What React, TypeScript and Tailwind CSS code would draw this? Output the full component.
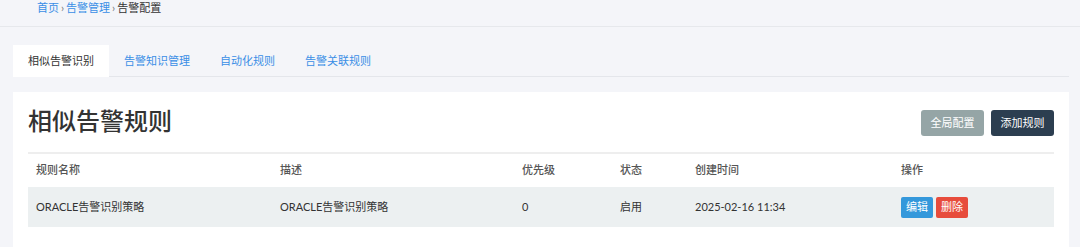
import React from "react";

const FONT = "font-['Lato','Noto_Sans_CJK_SC','Noto_Sans',sans-serif]";

const tabs = ["相似告警识别", "告警知识管理", "自动化规则", "告警关联规则"];

const cols = "grid grid-cols-[244px_242px_98px_75px_206px_1fr]";

export default function App() {
  return (
    <div className={`${FONT} h-[247px] w-full overflow-hidden bg-[#f4f5f9] text-[#333]`}>
      {/* breadcrumb */}
      <div className="flex h-[27px] items-start border-b border-[#e6e8ec] pl-[37px] text-[11px] leading-[15px]">
        <span className="text-[#3a8ee6]">首页</span>
        <span className="mx-[2px] text-[#777]">›</span>
        <span className="text-[#3a8ee6]">告警管理</span>
        <span className="mx-[2px] text-[#777]">›</span>
        <span className="text-[#333]">告警配置</span>
      </div>

      <div className="pl-[13px] pr-[11px] pt-[18px]">
        {/* tabs */}
        <div className="flex h-[32px] border-b border-[#e4e6eb]">
          {tabs.map((t, i) => (
            <div
              key={t}
              className={
                i === 0
                  ? "-mb-px flex h-[32px] items-center bg-white px-[15px] text-[11px] text-[#333]"
                  : "flex h-[32px] items-center px-[15px] text-[11px] text-[#3a8ee6]"
              }
            >
              {t}
            </div>
          ))}
        </div>

        {/* card */}
        <div className="mt-[15px] h-[155px] bg-white px-[15px] pt-[15px]">
          <div className="flex h-[45px] items-start justify-between">
            <h1 className="text-[24px] font-medium leading-[28px] text-[#333]">相似告警规则</h1>
            <div className="mt-[3px] flex gap-[7px]">
              <button className="flex h-[26px] w-[63px] items-center justify-center rounded-[3px] bg-[#95a5a6] text-[11px] text-white">
                全局配置
              </button>
              <button className="flex h-[26px] w-[63px] items-center justify-center rounded-[3px] bg-[#2c3e50] text-[11px] text-white">
                添加规则
              </button>
            </div>
          </div>

          <div className="border-t-2 border-[#eeeeee]">
            <div className={`${cols} h-[33px] items-center text-[11px] font-medium text-[#555]`}>
              <div className="pl-2">规则名称</div>
              <div className="pl-2">描述</div>
              <div className="pl-2">优先级</div>
              <div className="pl-2">状态</div>
              <div className="pl-2">创建时间</div>
              <div className="pl-2">操作</div>
            </div>
            <div className={`${cols} h-[40px] items-center bg-[#ecf0f1] text-[11px] text-[#333]`}>
              <div className="pl-2">ORACLE告警识别策略</div>
              <div className="pl-2">ORACLE告警识别策略</div>
              <div className="pl-2">0</div>
              <div className="pl-2">启用</div>
              <div className="pl-2">2025-02-16 11:34</div>
              <div className="flex gap-[3px] pl-2">
                <button className="flex h-[21px] w-[32px] items-center justify-center rounded-[2px] bg-[#3498db] text-[11px] text-white">
                  编辑
                </button>
                <button className="flex h-[21px] w-[32px] items-center justify-center rounded-[2px] bg-[#e74c3c] text-[11px] text-white">
                  删除
                </button>
              </div>
            </div>
          </div>
        </div>
      </div>
    </div>
  );
}
